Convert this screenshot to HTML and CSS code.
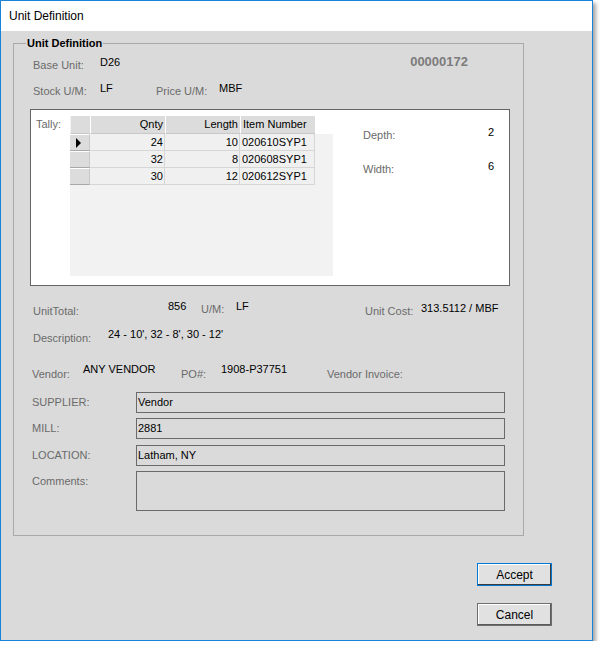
FILE: index.html
```html
<!DOCTYPE html>
<html>
<head>
<meta charset="utf-8">
<link rel="stylesheet" href="styles.css">
</head>
<body>
<div class="window">
  <div class="titlebar">Unit Definition</div>
  <div class="client">
    <div class="group">
      <div class="legend">Unit Definition</div>

      <div class="row r1">
        <span class="lbl w67">Base Unit:</span>
        <span class="val">D26</span>
        <span class="code">00000172</span>
      </div>

      <div class="row r2">
        <span class="lbl w67">Stock U/M:</span>
        <span class="val w56">LF</span>
        <span class="lbl w63">Price U/M:</span>
        <span class="val">MBF</span>
      </div>

      <div class="panel">
        <span class="lbl tally">Tally:</span>
        <div class="grid">
          <div class="dg">
            <div class="hc corner"></div>
            <div class="hc num">Qnty</div>
            <div class="hc num">Length</div>
            <div class="hc txt">Item Number</div>

            <div class="rh"><span class="cur"></span></div>
            <div class="dc num">24</div>
            <div class="dc num">10</div>
            <div class="dc txt">020610SYP1</div>

            <div class="rh"></div>
            <div class="dc num">32</div>
            <div class="dc num">8</div>
            <div class="dc txt">020608SYP1</div>

            <div class="rh"></div>
            <div class="dc num">30</div>
            <div class="dc num">12</div>
            <div class="dc txt">020612SYP1</div>
          </div>
        </div>
        <div class="dims">
          <div class="dim d1"><span class="lbl">Depth:</span><span class="val">2</span></div>
          <div class="dim d2"><span class="lbl">Width:</span><span class="val">6</span></div>
        </div>
      </div>

      <div class="row r3">
        <span class="lbl lo w135">UnitTotal:</span>
        <span class="val w33">856</span>
        <span class="lbl lo2 w35">U/M:</span>
        <span class="val w129">LF</span>
        <span class="lbl lo w56">Unit Cost:</span>
        <span class="val cost">313.5112 / MBF</span>
      </div>

      <div class="row r4">
        <span class="lbl lo3 w75">Description:</span>
        <span class="val">24 - 10', 32 - 8', 30 - 12'</span>
      </div>

      <div class="row r5">
        <span class="lbl lo4 w51">Vendor:</span>
        <span class="val w98">ANY VENDOR</span>
        <span class="lbl lo4 w40">PO#:</span>
        <span class="val w106">1908-P37751</span>
        <span class="lbl lo4">Vendor Invoice:</span>
      </div>

      <div class="field f1">
        <span class="lbl flbl">SUPPLIER:</span>
        <div class="box">Vendor</div>
      </div>
      <div class="field f2">
        <span class="lbl flbl">MILL:</span>
        <div class="box">2881</div>
      </div>
      <div class="field f3">
        <span class="lbl flbl">LOCATION:</span>
        <div class="box">Latham, NY</div>
      </div>
      <div class="field f4">
        <span class="lbl flbl clbl">Comments:</span>
        <div class="box tall"></div>
      </div>
    </div>

    <div class="buttons">
      <button class="btn accept">Accept</button>
      <button class="btn cancel">Cancel</button>
    </div>
  </div>
</div>
</body>
</html>
```

FILE: styles.css
```css
* { box-sizing: border-box; }

body {
  margin: 0;
  background: #ffffff;
  font-family: "Liberation Sans", Arial, sans-serif;
  font-size: 11px;
  color: #000;
}

.window {
  width: 593px;
  height: 641px;
  border: 1px solid #1883d7;
  background: #dadada;
  box-shadow: 3px 3px 4px rgba(0, 0, 0, 0.35);
  display: flex;
  flex-direction: column;
}

.titlebar {
  height: 30px;
  background: #ffffff;
  font-size: 12px;
  line-height: 14px;
  padding: 8px 0 0 8px;
  color: #000;
}

.client {
  flex: 1;
  padding: 12px 0 0 12px;
}

.group {
  position: relative;
  width: 511px;
  height: 493px;
  border: 1px solid #a9a9a9;
}

.legend {
  position: absolute;
  left: 12px;
  top: -7px;
  padding: 0 1px;
  background: #dadada;
  font-weight: bold;
  line-height: 13px;
  color: #000;
}

.lbl { color: #6a6a6a; line-height: 13px; white-space: nowrap; }
.val { color: #000; line-height: 13px; white-space: nowrap; }

.row { display: flex; align-items: flex-start; }

.w33 { width: 33px; }
.w35 { width: 35px; }
.w40 { width: 40px; }
.w51 { width: 51px; }
.w56 { width: 56px; }
.w63 { width: 63px; }
.w67 { width: 67px; }
.w75 { width: 75px; }
.w98 { width: 98px; }
.w106 { width: 106px; }
.w129 { width: 129px; }
.w135 { width: 135px; }

/* row 1 */
.r1 { height: 36px; padding-left: 19px; }
.r1 .lbl { margin-top: 15px; }
.r1 .val { margin-top: 12px; }
.code {
  margin-left: auto;
  margin-right: 55px;
  margin-top: 10px;
  font-size: 13px;
  line-height: 15px;
  font-weight: bold;
  color: #7c7c7c;
}

/* row 2 */
.r2 { height: 29px; padding-left: 19px; }
.r2 .lbl { margin-top: 5px; }
.r2 .val { margin-top: 2px; }

/* tally panel */
.panel {
  margin-left: 16px;
  width: 480px;
  height: 177px;
  background: #ffffff;
  border: 1px solid #646464;
  display: flex;
  align-items: flex-start;
}
.tally { margin: 8px 0 0 5px; width: 34px; }

.grid {
  margin-top: 6px;
  width: 263px;
  height: 160px;
  background: linear-gradient(#ffffff 0, #ffffff 18px, #f2f2f2 18px);
}
.dg {
  display: grid;
  grid-template-columns: 20px 75px 75px 75px;
  grid-template-rows: 18px 17px 17px 17px;
}
.hc {
  background: #dcdcdc;
  border-left: 1px solid #ffffff;
  border-bottom: 1px solid #c8c8c8;
  line-height: 17px;
  color: #000;
  white-space: nowrap;
  overflow: hidden;
}
.hc.corner { border-left: 1px solid #f4f4f4; }
.hc.num { text-align: right; padding-right: 2px; }
.hc.txt { padding-left: 2px; }

.rh {
  background: #dcdcdc;
  border-top: 1px solid #ffffff;
  border-bottom: 1px solid #a8a8a8;
  border-right: 1px solid #c8c8c8;
  display: flex;
  align-items: center;
  padding-left: 6px;
}
.cur {
  width: 0;
  height: 0;
  border-left: 5px solid #000;
  border-top: 5px solid transparent;
  border-bottom: 5px solid transparent;
}
.dc {
  background: #f0f0f0;
  border-right: 1px solid #d6d6d6;
  border-bottom: 1px solid #d6d6d6;
  line-height: 16px;
  color: #000;
  white-space: nowrap;
}
.dc.num { text-align: right; padding-right: 1px; }
.dc.txt { padding-left: 2px; }

.dims { margin-left: 30px; width: 131px; }
.dim { display: flex; justify-content: space-between; align-items: flex-start; }
.d1 { margin-top: 16px; }
.d2 { margin-top: 18px; }
.dim .lbl { margin-top: 3px; }

/* row 3 */
.r3 { height: 42px; padding-left: 19px; }
.r3 .val { margin-top: 14px; }
.r3 .val.cost { margin-top: 16px; }
.lo { margin-top: 19px; }
.lo2 { margin-top: 17px; }

/* row 4 */
.r4 { height: 35px; padding-left: 19px; }
.lo3 { margin-top: 4px; }

/* row 5 */
.r5 { height: 29px; padding-left: 18px; }
.lo4 { margin-top: 5px; }

/* fields */
.field { display: flex; align-items: flex-start; padding-left: 18px; }
.flbl { width: 104px; margin-top: 4px; }
.clbl { margin-top: 4px; }
.f1 { margin-bottom: 5px; }
.f2 { margin-bottom: 6px; }
.f3 { margin-bottom: 5px; }

.box {
  width: 369px;
  height: 21px;
  border: 1px solid #6a6a6a;
  background: #dadada;
  padding: 2px 0 0 1px;
  line-height: 14px;
  color: #000;
}
.box.tall { height: 40px; }

/* buttons */
.buttons {
  display: flex;
  flex-direction: column;
  align-items: flex-end;
  padding-right: 40px;
  margin-top: 27px;
  gap: 17px;
}
.btn {
  width: 75px;
  height: 23px;
  margin: 0;
  padding: 0;
  background: #e1e1e1;
  font-family: "Liberation Sans", Arial, sans-serif;
  font-size: 12px;
  color: #000;
}
.accept {
  border: 1px solid #0078d7;
  box-shadow: inset -1px -1px 0 #3c3c3c, inset 1px 1px 0 #ffffff;
}
.cancel {
  border: 1px solid #6e6e6e;
  box-shadow: inset -1px -1px 0 #5a5a5a, inset 1px 1px 0 #ffffff;
}
```
